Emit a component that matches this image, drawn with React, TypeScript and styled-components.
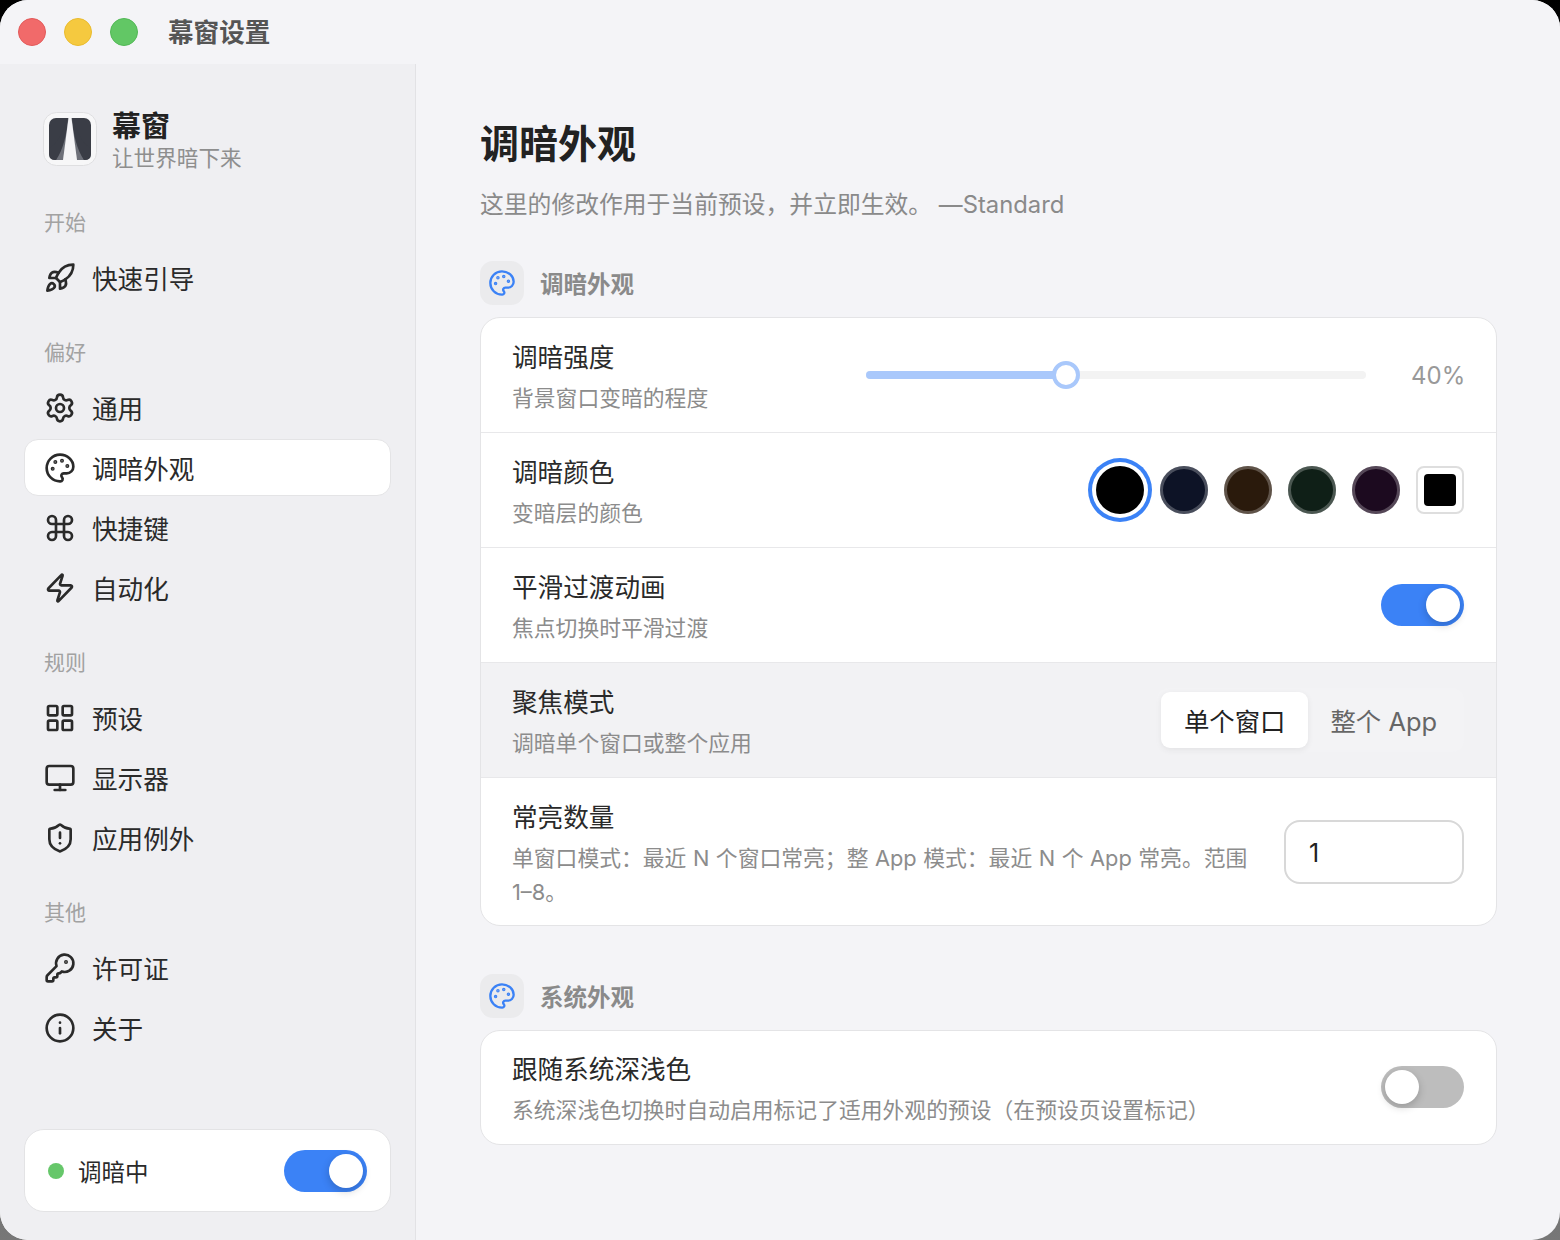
import { FC, ReactNode } from "react"
import styled, { createGlobalStyle } from "styled-components"
import {
  Command,
  Info,
  KeyRound,
  LayoutGrid,
  LucideIcon,
  Monitor,
  Palette,
  Rocket,
  Settings,
  ShieldAlert,
  Zap,
} from "lucide-react"

const FONT = `Inter, "Noto Sans CJK SC", sans-serif`

const GlobalStyle = createGlobalStyle`
  html, body {
    margin: 0;
    padding: 0;
    width: 1560px;
    height: 1240px;
    overflow: hidden;
    background: linear-gradient(180deg, #000 0%, #777 100%);
  }
  * { box-sizing: border-box; }
`
const Window = styled.div`
  width: 1560px;
  height: 1240px;
  border-radius: 28px;
  overflow: hidden;
  background: #f4f4f7;
  font-family: ${FONT};
  color: #222;
  display: flex;
  flex-direction: column;
`
const TitleBar = styled.div`
  height: 64px;
  flex: none;
  display: flex;
  align-items: center;
  padding-left: 18px;
  background: #f4f4f7;
`
const Light = styled.span<{ $bg: string; $edge: string }>`
  width: 28px;
  height: 28px;
  border-radius: 50%;
  margin-right: 18px;
  background: ${({ $bg }) => $bg};
  border: 1px solid ${({ $edge }) => $edge};
`
const WindowTitle = styled.span`
  margin: 0 0 3px 12px;
  font-size: 25.6px;
  font-weight: 700;
  color: #555;
`
const Body = styled.div`
  flex: 1;
  display: flex;
  min-height: 0;
`
const Sidebar = styled.aside`
  width: 416px;
  flex: none;
  display: flex;
  flex-direction: column;
  padding: 48px 24px 28px;
  background: #efeff2;
  border-right: 1px solid #e2e2e5;
`
const Brand = styled.div`
  display: flex;
  align-items: center;
  gap: 15px;
  padding-left: 19px;
  height: 54px;
  margin-bottom: 42px;
`
const BrandText = styled.div`
  display: flex;
  flex-direction: column;
  margin-top: 4px;
`
const BrandName = styled.span`
  font-size: 29px;
  font-weight: 700;
  line-height: 34px;
  color: #222;
`
const BrandTag = styled.span`
  font-size: 21.6px;
  line-height: 28px;
  color: #8e8e8e;
`
const GroupLabel = styled.div`
  height: 30px;
  line-height: 30px;
  padding-left: 20px;
  font-size: 21px;
  color: #a2a2a2;
  margin-bottom: 11px;
`
const NavList = styled.div`
  display: flex;
  flex-direction: column;
  gap: 3px;
  margin-bottom: 32px;
`
const NavItem = styled.div<{ $active?: boolean }>`
  height: 57px;
  display: flex;
  align-items: center;
  gap: 16px;
  padding-left: 19px;
  border-radius: 14px;
  color: #2a2a2a;
  border: 1px solid ${({ $active }) => ($active ? "#e4e4e6" : "transparent")};
  background: ${({ $active }) => ($active ? "#fff" : "transparent")};
`
const NavLabel = styled.span`
  font-size: 25.6px;
  margin-bottom: 1px;
`
const StatusCard = styled.div`
  margin-top: auto;
  height: 83px;
  display: flex;
  align-items: center;
  padding: 0 23px;
  background: #fff;
  border: 1px solid #e3e3e5;
  border-radius: 20px;
`
const StatusDot = styled.span`
  width: 16px;
  height: 16px;
  border-radius: 50%;
  background: #66c76a;
  margin-right: 14px;
`
const StatusText = styled.span`
  flex: 1;
  font-size: 23.5px;
  color: #2a2a2a;
`
const Toggle = styled.div<{ $on?: boolean }>`
  width: 83px;
  height: 42px;
  flex: none;
  border-radius: 21px;
  padding: 4px;
  display: flex;
  justify-content: ${({ $on }) => ($on ? "flex-end" : "flex-start")};
  background: ${({ $on }) => ($on ? "#3b82f6" : "#bdbdbd")};
`
const Knob = styled.span`
  width: 34px;
  height: 34px;
  border-radius: 50%;
  background: #fff;
  box-shadow: 0 3px 8px rgba(0, 0, 0, 0.2);
`
const Main = styled.main`
  flex: 1;
  min-width: 0;
  padding: 54px 63px 0 64px;
`
const PageTitle = styled.h1`
  margin: 0;
  font-size: 39px;
  line-height: 52px;
  font-weight: 700;
  color: #222;
`
const PageSub = styled.p`
  margin: 18px 0 0;
  font-size: 23.8px;
  line-height: 34px;
  color: #8a8a8a;
`
const SectionHead = styled.div<{ $top: number }>`
  display: flex;
  align-items: center;
  gap: 16px;
  height: 44px;
  margin: ${({ $top }) => $top}px 0 12px;
`
const SectionIcon = styled.span`
  width: 44px;
  height: 44px;
  border-radius: 13px;
  display: flex;
  align-items: center;
  justify-content: center;
  background: #ebebed;
  color: #3b82f6;
`
const SectionTitle = styled.span`
  font-size: 23.5px;
  font-weight: 700;
  color: #8a8a8a;
`
const Card = styled.section`
  background: #fff;
  border: 1px solid #e4e4e6;
  border-radius: 20px;
  overflow: hidden;
`
const Row = styled.div<{ $hover?: boolean; $tall?: boolean }>`
  height: ${({ $tall }) => ($tall ? 148 : 115)}px;
  display: flex;
  align-items: ${({ $tall }) => ($tall ? "flex-start" : "center")};
  justify-content: space-between;
  padding: ${({ $tall }) => ($tall ? "18px" : "0")} 32px 0 31px;
  gap: 36px;
  background: ${({ $hover }) => ($hover ? "#f2f2f4" : "transparent")};
  & + & { border-top: 1px solid #e8e8ea; }
  &:first-child { height: 114px; }
  &:only-child { height: 113px; padding-bottom: 1px; }
`
const RowText = styled.div<{ $tall?: boolean }>`
  min-width: 0;
  margin-top: 5px;
  display: flex;
  flex-direction: column;
  gap: 6px;
`
const RowLabel = styled.div`
  font-size: 25.6px;
  line-height: 34px;
  color: #2a2a2a;
`
const RowHint = styled.div`
  font-size: 21.8px;
  line-height: 34px;
  word-spacing: 0.4px;
  color: #8c8c8c;
`
const NoBreak = styled.span`
  white-space: nowrap;
`
const SliderWrap = styled.div`
  display: flex;
  align-items: center;
  gap: 46px;
`
const Track = styled.div`
  position: relative;
  width: 500px;
  height: 8px;
  border-radius: 4px;
  background: #f3f3f3;
`
const TrackFill = styled.div`
  height: 100%;
  border-radius: 4px;
  background: #a9c8fb;
`
const Thumb = styled.span`
  position: absolute;
  top: -10px;
  width: 28px;
  height: 28px;
  margin-left: -14px;
  border-radius: 50%;
  background: #fff;
  border: 4px solid #a9c8fb;
`
const SliderValue = styled.span`
  width: 52px;
  font-size: 24px;
  text-indent: -1px;
  color: #999;
  white-space: nowrap;
`
const Swatches = styled.div`
  display: flex;
  align-items: center;
  gap: 16px;
`
const Swatch = styled.span<{ $color: string; $selected?: boolean }>`
  width: 48px;
  height: 48px;
  border-radius: 50%;
  background: ${({ $color }) => $color};
  box-shadow: ${({ $selected }) =>
    $selected
      ? "0 0 0 4px #fff, 0 0 0 8px #3b82f6"
      : "inset 0 0 0 3px rgba(255, 255, 255, 0.25)"};
`
const CustomSwatch = styled.span`
  width: 48px;
  height: 48px;
  display: flex;
  align-items: center;
  justify-content: center;
  border: 2px solid #dedede;
  border-radius: 8px;
  background: #fff;
  &::after {
    content: "";
    width: 32px;
    height: 32px;
    border-radius: 4px;
    background: #000;
  }
`
const Segmented = styled.div`
  display: flex;
  align-items: center;
  height: 64px;
  padding: 4px;
  border-radius: 12px;
  background: #f3f3f5;
`
const Segment = styled.span<{ $active?: boolean }>`
  height: 56px;
  display: flex;
  align-items: center;
  padding: 0 23px;
  border-radius: 9px;
  font-size: 25.4px;
  color: ${({ $active }) => ($active ? "#222" : "#666")};
  background: ${({ $active }) => ($active ? "#fff" : "transparent")};
  box-shadow: ${({ $active }) => ($active ? "0 2px 6px rgba(0, 0, 0, 0.07)" : "none")};
  & + & { padding-left: 22px; }
`
const NumberBox = styled.div`
  width: 180px;
  height: 64px;
  flex: none;
  margin-top: 24px;
  display: flex;
  align-items: center;
  padding: 2px 0 0 23px;
  border: 2px solid #d8d8d8;
  border-radius: 16px;
  font-size: 25px;
  color: #222;
`

type NavEntry = { icon: LucideIcon; label: string; active?: boolean }
const NAV: { title: string; items: NavEntry[] }[] = [
  { title: "开始", items: [{ icon: Rocket, label: "快速引导" }] },
  {
    title: "偏好",
    items: [
      { icon: Settings, label: "通用" },
      { icon: Palette, label: "调暗外观", active: true },
      { icon: Command, label: "快捷键" },
      { icon: Zap, label: "自动化" },
    ],
  },
  {
    title: "规则",
    items: [
      { icon: LayoutGrid, label: "预设" },
      { icon: Monitor, label: "显示器" },
      { icon: ShieldAlert, label: "应用例外" },
    ],
  },
  {
    title: "其他",
    items: [
      { icon: KeyRound, label: "许可证" },
      { icon: Info, label: "关于" },
    ],
  },
]

const SWATCHES = ["#0d1326", "#2a1a0c", "#0f1f17", "#1c0a1f"]

// full-width punctuation, spelled out so it can't get normalised to ASCII
const PAGE_SUB = "这里的修改作用于当前预设\uFF0C并立即生效。 —Standard"
const COUNT_HINT = "单窗口模式\uFF1A最近 N 个窗口常亮\uFF1B整 App 模式\uFF1A最近 N 个 App 常亮。范围 "
const FOLLOW_HINT = "系统深浅色切换时自动启用标记了适用外观的预设\uFF08在预设页设置标记\uFF09"

const AppLogo = () => (
  <svg width="54" height="54" viewBox="0 0 54 54">
    <rect x="0.5" y="0.5" width="53" height="53" rx="13" fill="#f7f7f8" stroke="#dfdfe1" />
    <rect x="6" y="6" width="42" height="42" rx="7" fill="#3a3d46" />
    <path d="M25 6 L13 48 L41 48 L29 6 Z" fill="#6d7079" />
    <path d="M6 36 C13 33 20 22 24 6 L25 6 C24 22 20 38 13 48 L12 48 Q6 48 6 42 Z" fill="#3a3d46" />
    <path d="M48 36 C41 33 34 22 30 6 L29 6 C30 22 34 38 41 48 L42 48 Q48 48 48 42 Z" fill="#3a3d46" />
    <path d="M25.5 6 L28.5 6 L34 48 L20 48 Z" fill="#f4f4f6" />
  </svg>
)

const Section: FC<{ title: string; top: number; children: ReactNode }> = ({ title, top, children }) => (
  <>
    <SectionHead $top={top}>
      <SectionIcon>
        <Palette size={28} strokeWidth={2} />
      </SectionIcon>
      <SectionTitle>{title}</SectionTitle>
    </SectionHead>
    <Card>{children}</Card>
  </>
)

const SettingText: FC<{ label: string; hint: ReactNode }> = ({ label, hint }) => (
  <RowText>
    <RowLabel>{label}</RowLabel>
    <RowHint>{hint}</RowHint>
  </RowText>
)

export default function App() {
  return (
    <>
      <GlobalStyle />
      <Window>
        <TitleBar>
          <Light $bg="#f16a6a" $edge="#e25a5a" />
          <Light $bg="#f5c93f" $edge="#e9bb2e" />
          <Light $bg="#62c765" $edge="#52b856" />
          <WindowTitle>幕窗设置</WindowTitle>
        </TitleBar>
        <Body>
          <Sidebar>
            <Brand>
              <AppLogo />
              <BrandText>
                <BrandName>幕窗</BrandName>
                <BrandTag>让世界暗下来</BrandTag>
              </BrandText>
            </Brand>
            {NAV.map((group) => (
              <div key={group.title}>
                <GroupLabel>{group.title}</GroupLabel>
                <NavList>
                  {group.items.map(({ icon: Icon, label, active }) => (
                    <NavItem key={label} $active={active}>
                      <Icon size={32} strokeWidth={2} />
                      <NavLabel>{label}</NavLabel>
                    </NavItem>
                  ))}
                </NavList>
              </div>
            ))}
            <StatusCard>
              <StatusDot />
              <StatusText>调暗中</StatusText>
              <Toggle $on>
                <Knob />
              </Toggle>
            </StatusCard>
          </Sidebar>
          <Main>
            <PageTitle>调暗外观</PageTitle>
            <PageSub>{PAGE_SUB}</PageSub>
            <Section title="调暗外观" top={39}>
              <Row>
                <SettingText label="调暗强度" hint="背景窗口变暗的程度" />
                <SliderWrap>
                  <Track>
                    <TrackFill style={{ width: "40%" }} />
                    <Thumb style={{ left: "40%" }} />
                  </Track>
                  <SliderValue>40%</SliderValue>
                </SliderWrap>
              </Row>
              <Row>
                <SettingText label="调暗颜色" hint="变暗层的颜色" />
                <Swatches>
                  <Swatch $color="#000" $selected />
                  {SWATCHES.map((c) => (
                    <Swatch key={c} $color={c} />
                  ))}
                  <CustomSwatch />
                </Swatches>
              </Row>
              <Row>
                <SettingText label="平滑过渡动画" hint="焦点切换时平滑过渡" />
                <Toggle $on>
                  <Knob />
                </Toggle>
              </Row>
              <Row $hover>
                <SettingText label="聚焦模式" hint="调暗单个窗口或整个应用" />
                <Segmented>
                  <Segment $active>单个窗口</Segment>
                  <Segment>整个 App</Segment>
                </Segmented>
              </Row>
              <Row $tall>
                <SettingText
                  label="常亮数量"
                  hint={
                    <>
                      {COUNT_HINT}
                      <NoBreak>1–8。</NoBreak>
                    </>
                  }
                />
                <NumberBox>1</NumberBox>
              </Row>
            </Section>
            <Section title="系统外观" top={48}>
              <Row>
                <SettingText label="跟随系统深浅色" hint={FOLLOW_HINT} />
                <Toggle>
                  <Knob />
                </Toggle>
              </Row>
            </Section>
          </Main>
        </Body>
      </Window>
    </>
  )
}
